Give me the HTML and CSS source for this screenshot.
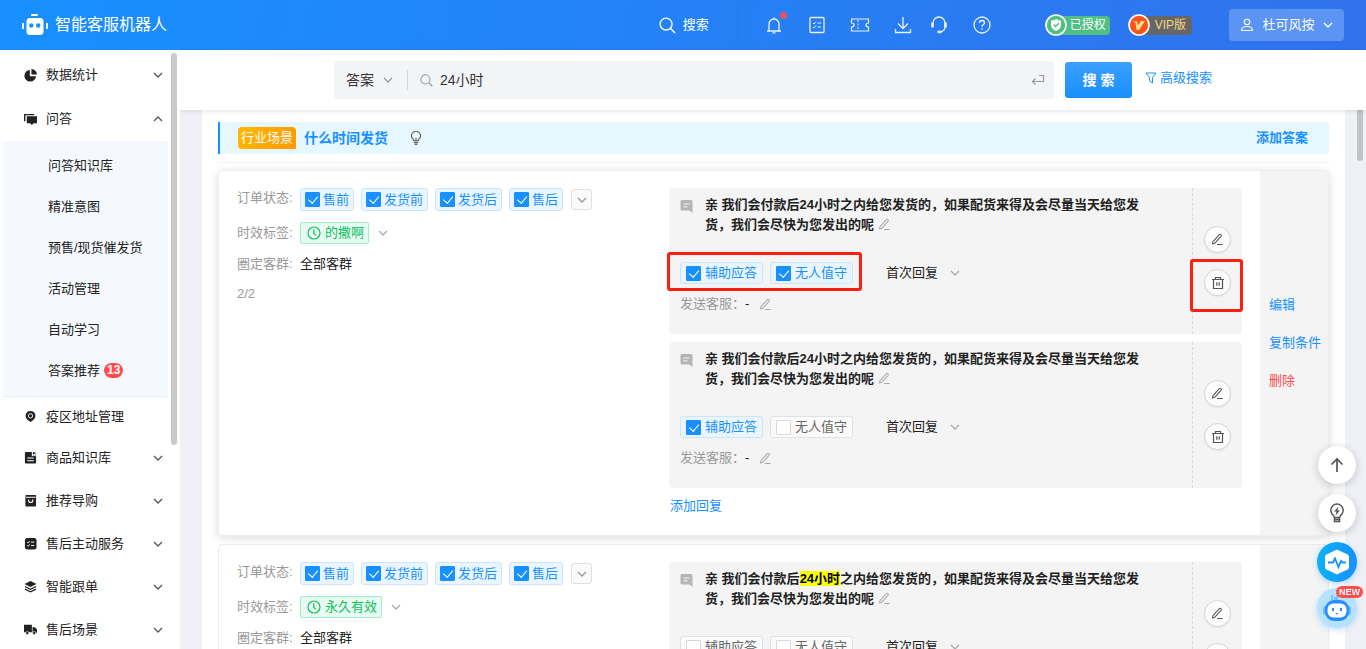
FILE: index.html
```html
<!DOCTYPE html>
<html lang="zh-CN">
<head>
<meta charset="utf-8">
<title>智能客服机器人</title>
<link rel="stylesheet" href="styles.css">
</head>
<body>
<svg class="sprite" aria-hidden="true">
  <symbol id="down" viewBox="0 0 10 10"><path d="M1 3l4 4 4-4" fill="none" stroke="currentColor" stroke-width="1.3"/></symbol>
  <symbol id="pen" viewBox="0 0 14 14"><path d="M2.2 9.2L9 1.8q.8-.8 1.7 0t.1 1.800L4.200 11l-2.700.8zM6.500 12.400h6" fill="none" stroke="currentColor" stroke-width="1.100" stroke-linejoin="round"/></symbol>
  <symbol id="trash" viewBox="0 0 14 14"><path d="M1 3.500h12M4.500 3.300V1.500h5v1.800M2.500 3.500v9h9v-9M5.800 6.200v3.600M8.200 6.200v3.600" fill="none" stroke="currentColor" stroke-width="1.200"/></symbol>
  <symbol id="clock" viewBox="0 0 14 14"><circle cx="7" cy="7" r="6" fill="none" stroke="currentColor" stroke-width="1.200"/><path d="M6.800 3.200v4.300l2 1.800" fill="none" stroke="currentColor" stroke-width="1.200"/></symbol>
  <symbol id="chat" viewBox="0 0 12 13"><path d="M1.500 0h9Q12 0 12 1.500V13L8.800 10.500H1.500Q0 10.500 0 9V1.500Q0 0 1.500 0z" fill="#b5b5b5"/><path d="M3 4h6M3 6.800h4" stroke="#f4f4f4"/></symbol>
  <symbol id="lens" viewBox="0 0 18 18"><circle cx="7.500" cy="7.500" r="6.300" fill="none" stroke="currentColor" stroke-width="1.400"/><path d="M12 12l5 5" stroke="currentColor" stroke-width="1.600"/></symbol>
</svg>

<header class="topbar">
  <svg class="logo" viewBox="0 0 26 22"><rect x="9" width="7" height="2" rx="1" fill="#fff"/><rect x="4.500" y="4" width="17" height="17" rx="3.500" fill="#fff"/><path d="M1 9v6M25 9v6" stroke="#fff" stroke-width="1.800"/><circle cx="9.300" cy="11.500" r="2.200" fill="#1890ff"/><circle cx="16.200" cy="11.500" r="2.200" fill="#1890ff"/></svg>
  <h1 class="brand">智能客服机器人</h1>
  <button class="top-search"><svg class="i17"><use href="#lens"/></svg>搜索</button>
  <i class="rule"></i>
  <nav class="top-icons">
    <button class="icon-btn bell" aria-label="通知"><svg viewBox="0 0 20 20"><path d="M3 16h14M5 16V9a5 5 0 0110 0v7M10 4V2.500M8.500 17.800h3" fill="none" stroke="currentColor" stroke-width="1.300"/></svg><i class="dot"></i></button>
    <button class="icon-btn" aria-label="任务"><svg viewBox="0 0 20 20"><rect x="3" y="2.500" width="14" height="15" rx="1" fill="none" stroke="currentColor" stroke-width="1.300"/><path d="M6 8l1 1 2-2.500M10.500 8H14M6 12l1 1 2-2.500M10.500 12H14" fill="none" stroke="currentColor"/></svg></button>
    <button class="icon-btn" aria-label="卡券"><svg viewBox="0 0 20 20"><path d="M1.500 4h17v4q-2.500 0-2.500 2t2.500 2v4h-17v-4Q4 12 4 10T1.500 8z" fill="none" stroke="currentColor" stroke-width="1.200"/><path d="M8 5v10" stroke="currentColor" stroke-dasharray="2 1.500"/></svg></button>
    <button class="icon-btn" aria-label="下载"><svg viewBox="0 0 20 20"><path d="M10 2v11M5 8.500l5 5 5-5M2.500 14v3.500h15V14" fill="none" stroke="currentColor" stroke-width="1.300"/></svg></button>
    <button class="icon-btn near" aria-label="客服"><svg viewBox="0 0 20 20"><path d="M4 8a6 6 0 0112 0v4q0 4-5 5" fill="none" stroke="currentColor" stroke-width="1.300"/><path d="M3.500 7.500v5M16.500 7.500v5M8.500 17h4" stroke="currentColor" stroke-width="2.600"/></svg></button>
    <button class="icon-btn" aria-label="帮助"><svg viewBox="0 0 20 20"><circle cx="10" cy="10" r="8" fill="none" stroke="currentColor" stroke-width="1.300"/><path d="M7.500 8a2.500 2.500 0 115 0c0 1.500-2.500 1.700-2.500 3.800M10 13.200v1.600" fill="none" stroke="currentColor" stroke-width="1.400"/></svg></button>
  </nav>
  <i class="rule"></i>
  <span class="badge auth"><svg viewBox="0 0 22 22"><circle cx="11" cy="11" r="10" fill="#4fbf84" stroke="#fff" stroke-width="1.600"/><path d="M11 5q2.500 1.500 5 1.500v4q0 4.500-5 6.500-5-2-5-6.500v-4q2.500 0 5-1.500z" fill="#fff"/><path d="M8.500 10.500l2 2 3.500-3.300" fill="none" stroke="#4fbf84" stroke-width="1.500"/></svg>已授权</span>
  <span class="badge vip"><svg viewBox="0 0 22 22"><circle cx="11" cy="11" r="10" fill="#fa541c" stroke="#fff" stroke-width="1.600"/><path d="M5 7.500h4l1 4 3-4.500h4l-6 9H8.500L7.500 9z" fill="#ffe08a"/></svg>VIP版</span>
  <i class="rule"></i>
  <button class="user"><svg class="i14" viewBox="0 0 14 14"><circle cx="7" cy="4" r="2.700" fill="none" stroke="currentColor" stroke-width="1.100"/><path d="M1.500 12.500q0-4 5.500-4t5.500 4z" fill="none" stroke="currentColor" stroke-width="1.100"/></svg><span>杜可风按</span><svg class="i10"><use href="#down"/></svg></button>
</header>

<div class="shell">
  <aside class="side">
    <ul class="menu">
      <li><a class="item tall" href="#"><svg viewBox="0 0 14 14"><path d="M6.300 1A6.300 6.300 0 1013 7.700H6.300z"/><path d="M8 0a6 6 0 016 6H8z"/></svg><span>数据统计</span><svg class="arr"><use href="#down"/></svg></a></li>
      <li><a class="item tall" href="#"><svg viewBox="0 0 14 14"><path d="M0 1h11v1.500H1.500V9H0z"/><path d="M3 3.500h11v7.500H10.500L8.500 13l-2-2H3z"/></svg><span>问答</span><svg class="arr up"><use href="#down"/></svg></a>
        <ul class="sub">
          <li><a href="#">问答知识库</a></li>
          <li><a href="#">精准意图</a></li>
          <li><a href="#">预售/现货催发货</a></li>
          <li><a href="#">活动管理</a></li>
          <li><a href="#">自动学习</a></li>
          <li><a href="#">答案推荐<b class="count">13</b></a></li>
        </ul>
      </li>
      <li><a class="item low" href="#"><svg viewBox="0 0 14 14"><path d="M7 1a5.300 5.300 0 015.300 5.300Q12.300 10 7 13 1.700 10 1.700 6.300A5.300 5.300 0 017 1z"/><circle cx="7" cy="6.300" r="2.300" fill="none" stroke="#fff"/></svg><span>疫区地址管理</span></a></li>
      <li><a class="item" href="#"><svg viewBox="0 0 14 14"><rect x="1" y="1" width="12" height="12.500" rx="1"/><path d="M9 1v4l1.500-1L12 5V1M3.500 7.500h7M3.500 10.500h7" fill="none" stroke="#fff" stroke-width="1.100"/></svg><span>商品知识库</span><svg class="arr"><use href="#down"/></svg></a></li>
      <li><a class="item" href="#"><svg viewBox="0 0 14 14"><rect x="1.500" y="1" width="11.500" height="12.500" rx="1"/><path d="M2 3.500h10.500M5 6v1a2.200 2.200 0 004.400 0V6" fill="none" stroke="#fff" stroke-width="1.200"/></svg><span>推荐导购</span><svg class="arr"><use href="#down"/></svg></a></li>
      <li><a class="item" href="#"><svg viewBox="0 0 14 14"><rect x="1" y="1" width="12.500" height="12.500" rx="2.500"/><path d="M3.500 5.500l1 1 1.500-2M7.500 5.500h3.500M3.500 9l1 1 1.500-2M7.500 9.200h3.500" fill="none" stroke="#fff"/></svg><span>售后主动服务</span><svg class="arr"><use href="#down"/></svg></a></li>
      <li><a class="item" href="#"><svg viewBox="0 0 14 14"><path d="M7 1l6.500 3.200L7 7.500.5 4.200z"/><path d="M1 7l6 3 6-3M1 9.800l6 3 6-3" fill="none" stroke="#222" stroke-width="1.300"/></svg><span>智能跟单</span><svg class="arr"><use href="#down"/></svg></a></li>
      <li><a class="item" href="#"><svg viewBox="0 0 14 14"><path d="M0 2h8.500v8H0zM9.200 4.500h2.600L14 7v3.500H9.200z"/><circle cx="3.500" cy="10.800" r="1.700" stroke="#fff" stroke-width=".6"/><circle cx="11" cy="10.800" r="1.700" stroke="#fff" stroke-width=".6"/></svg><span>售后场景</span><svg class="arr"><use href="#down"/></svg></a></li>
    </ul>
    <i class="side-thumb"></i>
  </aside>

  <main class="main">
    <form class="searchbar">
      <div class="field">
        <label class="pick"><select aria-label="搜索范围"><option>答案</option></select><svg class="i10"><use href="#down"/></svg></label>
        <svg class="i13"><use href="#lens"/></svg>
        <input class="query" type="text" value="24小时" aria-label="关键词">
        <svg class="i14" viewBox="0 0 14 14"><path d="M8 2.500h4.500v6H1.500M4.500 5.500l-3 3 3 3" fill="none" stroke="currentColor" stroke-width="1.200"/></svg>
      </div>
      <button class="go" type="button">搜 索</button>
      <a class="adv" href="#"><svg class="i12" viewBox="0 0 12 12"><path d="M1 1h10L7.500 5.500V11L4.500 9V5.500z" fill="none" stroke="currentColor"/></svg>高级搜索</a>
    </form>

    <div class="scroll">
      <section class="panel">
        <div class="head">
          <div class="title">
            <span class="scene">行业场景</span>
            <h2>什么时间发货</h2>
            <svg class="bulb" viewBox="0 0 12 14"><path d="M4 10Q4 8.500 2.500 7.500a4.400 4.400 0 117 0Q8 8.500 8 10zM4 11.700h4M4.600 13.300h2.800M6 10V7" fill="none" stroke="#666" stroke-width="1.200"/></svg>
            <a class="add" href="#">添加答案</a>
          </div>
        </div>

        <article class="card raised">
          <div class="conds">
            <div class="row first"><span class="key">订单状态:</span>
              <label class="tag on"><input type="checkbox" checked>售前</label>
              <label class="tag on"><input type="checkbox" checked>发货前</label>
              <label class="tag on"><input type="checkbox" checked>发货后</label>
              <label class="tag on"><input type="checkbox" checked>售后</label>
              <button class="more" aria-label="更多"><svg class="i10"><use href="#down"/></svg></button>
            </div>
            <div class="row"><span class="key">时效标签:</span><span class="time"><svg class="i14"><use href="#clock"/></svg>的撒啊</span><svg class="i10 grey"><use href="#down"/></svg></div>
            <div class="row"><span class="key">圈定客群:</span><span>全部客群</span></div>
            <div class="row"><span class="key">2/2</span></div>
          </div>
          <div class="replies">
            <div class="reply">
              <div class="body">
                <div class="msg"><svg class="chat"><use href="#chat"/></svg><p>亲 我们会付款后24小时之内给您发货的，如果配货来得及会尽量当天给您发货，我们会尽快为您发出的呢 <svg class="pen"><use href="#pen"/></svg></p></div>
                <div class="opts">
                  <label class="tag wide on"><input type="checkbox" checked>辅助应答</label>
                  <label class="tag wide on"><input type="checkbox" checked>无人值守</label>
                  <button class="when">首次回复<svg class="i10 grey"><use href="#down"/></svg></button>
                  <i class="mark mark-opts"></i>
                </div>
                <div class="sender"><span class="key">发送客服：</span>-<svg class="pen"><use href="#pen"/></svg></div>
              </div>
              <div class="tools">
                <button class="round" aria-label="编辑"><svg class="i13"><use href="#pen"/></svg></button>
                <button class="round" aria-label="删除"><svg class="i14"><use href="#trash"/></svg><i class="mark mark-del"></i></button>
              </div>
            </div>
            <div class="reply">
              <div class="body">
                <div class="msg"><svg class="chat"><use href="#chat"/></svg><p>亲 我们会付款后24小时之内给您发货的，如果配货来得及会尽量当天给您发货，我们会尽快为您发出的呢 <svg class="pen"><use href="#pen"/></svg></p></div>
                <div class="opts">
                  <label class="tag wide on"><input type="checkbox" checked>辅助应答</label>
                  <label class="tag wide"><input type="checkbox">无人值守</label>
                  <button class="when">首次回复<svg class="i10 grey"><use href="#down"/></svg></button>
                </div>
                <div class="sender"><span class="key">发送客服：</span>-<svg class="pen"><use href="#pen"/></svg></div>
              </div>
              <div class="tools">
                <button class="round" aria-label="编辑"><svg class="i13"><use href="#pen"/></svg></button>
                <button class="round" aria-label="删除"><svg class="i14"><use href="#trash"/></svg></button>
              </div>
            </div>
            <a class="append" href="#">添加回复</a>
          </div>
          <div class="acts"><a href="#">编辑</a><a href="#">复制条件</a><a class="danger" href="#">删除</a></div>
        </article>

        <article class="card">
          <div class="conds">
            <div class="row first"><span class="key">订单状态:</span>
              <label class="tag on"><input type="checkbox" checked>售前</label>
              <label class="tag on"><input type="checkbox" checked>发货前</label>
              <label class="tag on"><input type="checkbox" checked>发货后</label>
              <label class="tag on"><input type="checkbox" checked>售后</label>
              <button class="more" aria-label="更多"><svg class="i10"><use href="#down"/></svg></button>
            </div>
            <div class="row"><span class="key">时效标签:</span><span class="time"><svg class="i14"><use href="#clock"/></svg>永久有效</span><svg class="i10 grey"><use href="#down"/></svg></div>
            <div class="row"><span class="key">圈定客群:</span><span>全部客群</span></div>
          </div>
          <div class="replies">
            <div class="reply">
              <div class="body">
                <div class="msg"><svg class="chat"><use href="#chat"/></svg><p>亲 我们会付款后<mark>24小时</mark>之内给您发货的，如果配货来得及会尽量当天给您发货，我们会尽快为您发出的呢 <svg class="pen"><use href="#pen"/></svg></p></div>
                <div class="opts">
                  <label class="tag wide"><input type="checkbox">辅助应答</label>
                  <label class="tag wide"><input type="checkbox">无人值守</label>
                  <button class="when">首次回复<svg class="i10 grey"><use href="#down"/></svg></button>
                </div>
                <div class="sender"><span class="key">发送客服：</span>-<svg class="pen"><use href="#pen"/></svg></div>
              </div>
              <div class="tools">
                <button class="round" aria-label="编辑"><svg class="i13"><use href="#pen"/></svg></button>
                <button class="round" aria-label="删除"><svg class="i14"><use href="#trash"/></svg></button>
              </div>
            </div>
            <div class="reply">
              <div class="body">
                <div class="msg"><svg class="chat"><use href="#chat"/></svg><p>亲 我们会付款后<mark>24小时</mark>之内给您发货的，如果配货来得及会尽量当天给您发货，我们会尽快为您发出的呢 <svg class="pen"><use href="#pen"/></svg></p></div>
                <div class="opts">
                  <label class="tag wide"><input type="checkbox">辅助应答</label>
                  <label class="tag wide"><input type="checkbox">无人值守</label>
                  <button class="when">首次回复<svg class="i10 grey"><use href="#down"/></svg></button>
                </div>
                <div class="sender"><span class="key">发送客服：</span>-<svg class="pen"><use href="#pen"/></svg></div>
              </div>
              <div class="tools">
                <button class="round" aria-label="编辑"><svg class="i13"><use href="#pen"/></svg></button>
                <button class="round" aria-label="删除"><svg class="i14"><use href="#trash"/></svg></button>
              </div>
            </div>
            <a class="append" href="#">添加回复</a>
          </div>
          <div class="acts"><a href="#">编辑</a><a href="#">复制条件</a><a class="danger" href="#">删除</a></div>
        </article>
      </section>
      <i class="main-thumb"></i>
    </div>
  </main>
</div>

<div class="floats">
  <button class="float" aria-label="回到顶部"><svg viewBox="0 0 20 20"><path d="M10 17V4M4.500 9.500L10 4l5.500 5.500" fill="none" stroke="currentColor" stroke-width="1.700"/></svg></button>
  <button class="float" aria-label="提示"><svg viewBox="0 0 20 20"><path d="M7.300 14.500Q7 12.500 5.200 11.200a6.200 6.200 0 119.600 0Q13 12.500 12.700 14.500zM7.500 14.500v4h5v-4M7.500 16.500h5" fill="none" stroke="currentColor" stroke-width="1.500"/><path d="M11.500 3.500L7 8.500h2.500L8.500 12.500 13 7.500h-2.500z" fill="currentColor"/></svg></button>
  <button class="float big pulse" aria-label="诊断"><svg viewBox="0 0 26 26"><path d="M13 .5l10.500 5q1.500.8 1.500 2v11q0 1.200-1.500 2L13 25.500l-10.500-5q-1.500-.8-1.500-2v-11q0-1.200 1.500-2z" fill="#fff"/><path d="M4 13.500h5l2-4 3.500 8.500 2.500-6 1.500 1.500H22" fill="none" stroke="#1894f8" stroke-width="1.900"/></svg></button>
  <button class="float big bot" aria-label="机器人助手"><svg viewBox="0 0 28 28"><path d="M9 1v5M12 3v3M14 1v7" stroke="#5cb3ff" stroke-width="1.300"/><rect y="12" width="28" height="9" rx="3" fill="#69b8ff"/><rect x="2" y="6" width="24" height="21" rx="9" fill="#2a8cff"/><rect x="4.500" y="9.500" width="19" height="14" rx="6" fill="#fff"/><path d="M10 14v3M18 14v3" stroke="#2a8cff" stroke-width="2"/><path d="M12.500 19h3L14 20.800z" fill="#2a8cff"/></svg><b class="new">NEW</b></button>
</div>
</body>
</html>
```
FILE: styles.css
```css
* { box-sizing: border-box; }
body {
  margin: 0;
  height: 100vh;
  display: flex;
  flex-direction: column;
  overflow: hidden;
  background: #eff1f6;
  color: #222;
  font: 13px/20px "Liberation Sans", "Noto Sans CJK SC", sans-serif;
}
h1, h2, p, ul { margin: 0; padding: 0; }
ul { list-style: none; }
a { color: #1890ff; text-decoration: none; }
button, input, select { font: inherit; color: inherit; border: 0; background: none; margin: 0; padding: 0; }
svg { display: block; flex: none; }
.sprite { position: absolute; width: 0; height: 0; }
.i10 { width: 10px; height: 10px; }
.i12 { width: 12px; height: 12px; }
.i13 { width: 13px; height: 13px; }
.i14 { width: 14px; height: 14px; }
.i17 { width: 17px; height: 17px; }
.grey { color: #aaa; }

/* top bar */
.topbar {
  flex: none;
  height: 50px;
  display: flex;
  align-items: center;
  padding: 0 22px;
  color: #fff;
  background: linear-gradient(100deg, #1890ff, #3172ec);
}
.logo { width: 26px; height: 22px; }
.brand { margin: 0 auto 0 7px; font-size: 16px; font-weight: 400; line-height: 24px; }
.top-search { display: flex; align-items: center; gap: 7px; margin-right: 28px; }
.rule { width: 1px; height: 36px; background: #2673e3; opacity: .6; }
.top-icons { display: flex; gap: 23px; padding: 0 34px 0 26px; }
.icon-btn { position: relative; width: 20px; height: 20px; opacity: .9; }
.icon-btn.near { margin-left: -7px; }
.dot { position: absolute; top: -3px; right: -3px; width: 7px; height: 7px; border-radius: 50%; background: #ff4d4f; }
.badge {
  display: flex;
  align-items: center;
  gap: 3px;
  height: 19px;
  margin-left: 18px;
  padding-right: 4px;
  border-radius: 10px 4px 4px 10px;
  font-size: 12px;
}
.badge svg { width: 22px; height: 22px; }
.auth { background: #4fbf84; }
.vip { background: #666; color: #f5d77f; gap: 5px; margin-right: 18px; padding-right: 6px; }
.user {
  display: flex;
  align-items: center;
  justify-content: center;
  gap: 8px;
  height: 32px;
  width: 115px;
  margin-left: 18px;
  border-radius: 4px;
  background: #5b94f3;
}

/* side menu */
.shell { flex: 1; min-height: 0; display: flex; }
.side { position: relative; z-index: 2; flex: none; width: 180px; padding-top: 3px; overflow: hidden; background: #fff; }
.menu { width: 168px; }
.item { display: flex; align-items: center; gap: 9px; height: 43px; padding: 0 5px 0 24px; color: #222; }
.item.tall { height: 44px; }
.item.low { height: 39px; }
.item svg { width: 13px; height: 13px; fill: #222; }
.item .arr { width: 10px; height: 10px; margin-left: auto; color: #555; }
.item .up { transform: rotate(180deg); }
.sub { margin-left: 3px; padding: 4px 0 5px; background: #f5f9fd; border-bottom: 1px solid #e3edf9; }
.sub a { display: flex; align-items: center; gap: 4px; height: 41px; padding-left: 45px; color: #222; }
.count { padding: 0 3px; border-radius: 8px; background: #ff4d4f; color: #fff; font-size: 12px; line-height: 15px; }
.side-thumb { position: absolute; top: 3px; right: 3px; width: 6px; height: 392px; border-radius: 3px; background: #c9c9c9; }

/* search bar */
.main { flex: 1; min-width: 0; display: flex; flex-direction: column; }
.searchbar {
  position: relative;
  z-index: 1;
  display: flex;
  align-items: center;
  height: 60px;
  padding: 0 154px;
  background: #fff;
  box-shadow: 0 1px 5px rgba(0, 0, 0, .12);
}
.field { flex: 1; display: flex; align-items: center; height: 38px; padding: 0 9px 0 12px; border-radius: 4px; background: #f3f4f6; color: #999; }
.pick { display: flex; align-items: center; width: 62px; height: 20px; margin-right: 12px; border-right: 1px solid #d5d5d5; }
.pick select { appearance: none; width: 37px; font-size: 14px; color: #333; }
.query { flex: 1; min-width: 0; margin-left: 7px; outline: 0; font-size: 14px; color: #333; }
.go { width: 67px; height: 36px; margin: 0 13px 0 11px; border-radius: 3px; background: linear-gradient(#3ba0ff, #1890ff); color: #fff; font-size: 14px; font-weight: 700; }
.adv { display: flex; align-items: center; gap: 3px; margin-bottom: 4px; }

/* content */
.scroll { position: relative; flex: 1; min-height: 0; overflow: hidden; padding: 0 21px 0 22px; }
.panel { padding: 0 16px 16px; background: #fff; }
.main-thumb { position: absolute; top: 0; right: 3px; width: 6px; height: 51px; border-radius: 0 0 3px 3px; background: #c2c3c5; }
.head { padding: 12px 0 8px; border-bottom: 1px solid #f3f3f3; margin-bottom: 7px; }
.title { display: flex; align-items: center; height: 32px; padding: 0 21px 0 18px; border-left: 2px solid #1890ff; border-radius: 0 3px 3px 0; background: #e6f7ff; }
.scene { padding: 0 3px; border-radius: 4px 4px 0 4px; background: linear-gradient(110deg, #ffb900, #ff9800); color: #fff; line-height: 22px; }
.title h2 { margin-left: 8px; font-size: 14px; line-height: 20px; color: #1890ff; }
.bulb { width: 12px; height: 14px; margin-left: 22px; }
.add { margin-left: auto; font-weight: 700; }

.card {
  display: grid;
  grid-template-columns: 450fr 573fr 86px;
  margin-bottom: 8px;
  border: 1px solid #ececec;
  border-radius: 4px;
  overflow: hidden;
  background: #fff;
}
.raised { box-shadow: 0 2px 10px rgba(0, 0, 0, .14); border-color: #eee; }
.conds { min-width: 0; display: flex; flex-direction: column; gap: 10px; padding: 17px 0 0 18px; }
.row { display: flex; align-items: center; }
.row.first { align-items: flex-start; height: 24px; }
.key { color: #999; }
.row .key { width: 63px; }
.tag {
  display: flex;
  align-items: center;
  gap: 3px;
  height: 23px;
  margin-right: 7px;
  padding: 0 4px;
  border: 1px solid #e2e2e2;
  border-radius: 3px;
  background: #fafafa;
  color: #666;
  white-space: nowrap;
}
.tag.on { border-color: #cbe5fd; background: #eaf6ff; color: #1890ff; }
.tag.wide { gap: 4px; height: 22px; padding: 0 5px; }
.tag input { appearance: none; flex: none; position: relative; width: 15px; height: 15px; border: 1px solid #d9d9d9; border-radius: 1px; background: #fff; }
.tag input:checked { border-color: #1890ff; background: #1890ff; }
.tag input:checked::after { content: ""; position: absolute; left: 4px; top: 1px; width: 5px; height: 8px; border: solid #fff; border-width: 0 1px 1px 0; transform: rotate(40deg); }
.more { display: grid; place-items: center; width: 21px; height: 21px; margin: 1px 0 0 1px; border: 1px solid #e0e0e0; border-radius: 3px; background: #fafafa; color: #999; }
.time { display: flex; align-items: center; gap: 4px; height: 22px; margin-right: 9px; padding: 0 4px 0 6px; border: 1px solid #a3efc3; border-radius: 2px; background: #e8fdf1; color: #12bd62; }

.replies { min-width: 0; display: flex; flex-direction: column; gap: 8px; padding: 17px 0 19px; }
.reply { display: flex; border-radius: 4px; background: #f4f4f4; }
.body { flex: 1; min-width: 0; padding: 7px 11px 20px; }
.tools { flex: none; width: 50px; display: flex; flex-direction: column; align-items: center; justify-content: center; gap: 16px; border-left: 1px dashed #d9d9d9; }
.msg { display: flex; gap: 12px; padding-right: 36px; font-weight: 700; }
.chat { width: 13px; height: 13px; margin-top: 5px; }
.pen { display: inline-block; width: 13px; height: 13px; color: #aaa; vertical-align: -2px; }
.msg mark { background: #ff0; color: #000; }
.opts { position: relative; display: flex; align-items: center; margin-top: 27px; }
.when { display: flex; align-items: center; gap: 12px; margin-left: 26px; white-space: nowrap; }
.sender { display: flex; align-items: center; margin-top: 10px; }
.sender .pen { margin-left: 10px; }
.round { position: relative; display: grid; place-items: center; width: 27px; height: 27px; border: 1px solid #d6d6d6; border-radius: 50%; background: #fcfcfc; color: #555; box-shadow: 0 1px 2px rgba(0, 0, 0, .06); }
.mark { position: absolute; border: 3px solid #ff1e12; border-radius: 3px; }
.mark-opts { left: -13px; top: -10px; width: 195px; height: 39px; }
.mark-del { left: -15px; top: -11px; width: 53px; height: 53px; }
.append { align-self: flex-start; margin-left: 1px; }
.acts { display: flex; flex-direction: column; justify-content: center; margin-left: 18px; padding: 0 0 2px 9px; background: #f4f4f4; white-space: nowrap; }
.acts a { margin-bottom: 18px; }
.acts .danger { color: #ff4d4f; }

/* floating buttons */
.floats { position: fixed; z-index: 3; right: 9px; bottom: 21px; display: flex; flex-direction: column; align-items: center; gap: 6px; }
.float { position: relative; display: grid; place-items: center; width: 38px; height: 38px; margin-bottom: 4px; border-radius: 50%; background: #fff; color: #555; box-shadow: 0 2px 10px rgba(0, 0, 0, .2); }
.float svg { width: 20px; height: 20px; }
.float.big { width: 40px; height: 40px; margin: 0; }
.pulse { background: linear-gradient(90deg, #0bb2f5, #1890ff); box-shadow: 0 2px 6px rgba(24, 144, 255, .3); }
.float.pulse svg { width: 26px; height: 26px; }
.bot { background: #b5e2ff; box-shadow: 0 2px 6px rgba(24, 144, 255, .25); }
.float.bot svg { width: 28px; height: 28px; }
.new { position: absolute; top: -2px; right: -6px; padding: 0 3px; border-radius: 7px; background: #ff4d4f; color: #fff; font-size: 9px; line-height: 12px; }
```
